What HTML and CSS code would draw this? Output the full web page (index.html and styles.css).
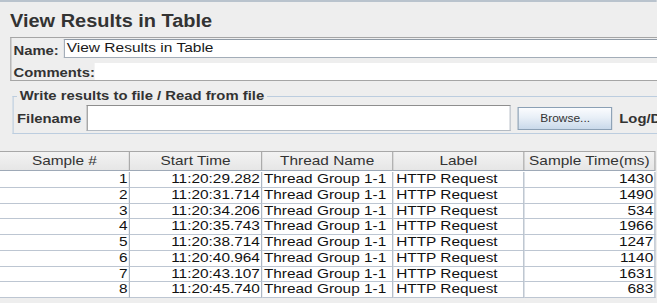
FILE: index.html
```html
<!DOCTYPE html>
<html>

<head>
  <link rel="stylesheet" href="styles.css">
</head>

<body>
  <div class="panel">
    <div class="topline"></div>
    <h1 class="title">View Results in Table</h1>

    <div class="namebox">
      <div class="namerow">
        <span class="lbl name-lbl">Name:</span>
        <div class="field">View Results in Table</div>
      </div>
      <div class="commentrow">
        <span class="lbl comment-lbl">Comments:</span>
        <div class="field plain"></div>
      </div>
    </div>

    <fieldset class="filebox">
      <legend>Write results to file / Read from file</legend>
      <div class="filerow">
        <span class="lbl file-lbl">Filename</span>
        <div class="filefield"></div>
        <button class="browse">Browse...</button>
        <span class="lbl log">Log/Display Only:</span>
      </div>
    </fieldset>

    <div class="results">
      <div class="head">
        <div>Sample #</div>
        <div>Start Time</div>
        <div>Thread Name</div>
        <div>Label</div>
        <div>Sample Time(ms)</div>
      </div>
      <div class="rows">
        <div class="row"><div class="num">1</div><div class="num">11:20:29.282</div><div>Thread Group 1-1</div><div class="lab">HTTP Request</div><div class="num">1430</div></div>
        <div class="row"><div class="num">2</div><div class="num">11:20:31.714</div><div>Thread Group 1-1</div><div class="lab">HTTP Request</div><div class="num">1490</div></div>
        <div class="row"><div class="num">3</div><div class="num">11:20:34.206</div><div>Thread Group 1-1</div><div class="lab">HTTP Request</div><div class="num">534</div></div>
        <div class="row"><div class="num">4</div><div class="num">11:20:35.743</div><div>Thread Group 1-1</div><div class="lab">HTTP Request</div><div class="num">1966</div></div>
        <div class="row"><div class="num">5</div><div class="num">11:20:38.714</div><div>Thread Group 1-1</div><div class="lab">HTTP Request</div><div class="num">1247</div></div>
        <div class="row"><div class="num">6</div><div class="num">11:20:40.964</div><div>Thread Group 1-1</div><div class="lab">HTTP Request</div><div class="num">1140</div></div>
        <div class="row"><div class="num">7</div><div class="num">11:20:43.107</div><div>Thread Group 1-1</div><div class="lab">HTTP Request</div><div class="num">1631</div></div>
        <div class="row"><div class="num">8</div><div class="num">11:20:45.740</div><div>Thread Group 1-1</div><div class="lab">HTTP Request</div><div class="num">683</div></div>
      </div>
    </div>
  </div>
</body>

</html>
```

FILE: styles.css
```css
body {
  margin: 0;
  background-color: #EEEEEE;
  font-family: "Liberation Sans", Arial, sans-serif;
  overflow: hidden;
}

/* the whole screen is a little wider than the font, so stretch it */
.panel {
  width: 576px;
  transform: scaleX(1.14);
  transform-origin: 0 0;
}

.topline {
  height: 2px;
  background-color: #B9C3CD;
}

.title {
  margin: 9px 0 0 8.8px;
  font-size: 17.5px;
  line-height: 20px;
  font-weight: bold;
  color: #333333;
}

.lbl {
  font-size: 13px;
  line-height: 15px;
  font-weight: bold;
  color: #333333;
  flex-shrink: 0;
}

.namebox {
  margin: 6px -40px 0 8.8px;
  border: 1px solid #A5A5A5;
  border-right: none;
}

.namerow {
  display: flex;
  padding-top: 1px;
  height: 20px;
  box-sizing: border-box;
}

.name-lbl {
  margin: 4px 0 0 2px;
}

.field {
  flex: 1;
  margin-left: 4.5px;
  height: 19px;
  box-sizing: border-box;
  border: 1px solid #A3ADB8;
  border-top-color: #8F9AA6;
  background-color: #FFFFFF;
  font-size: 13.6px;
  line-height: 16px;
  padding-left: 1.5px;
  color: #1A1A1A;
}

.commentrow {
  display: flex;
  margin-top: 5px;
  height: 17px;
}

.comment-lbl {
  margin: 1.5px 0 0 2px;
}

.field.plain {
  border: none;
  margin-left: 0;
  height: 17px;
}

.filebox {
  margin: 8px -40px 0 11.4px;
  padding: 0 0 2px 0;
  border: 1px solid #BCCDDF;
  border-right: none;
  min-width: 0;
}

.filebox legend {
  margin-left: 3px;
  padding: 0 2px;
  font-size: 13px;
  line-height: 14px;
  font-weight: bold;
  color: #333333;
}

.filerow {
  display: flex;
  align-items: center;
  margin-top: 2px;
  height: 26px;
  white-space: nowrap;
}

.file-lbl {
  margin-left: 2.5px;
}

.filefield {
  flex-shrink: 0;
  width: 372px;
  height: 26px;
  margin-left: 5px;
  box-sizing: border-box;
  border: 1px solid #B4BBC3;
  border-top-color: #8E8E8E;
  border-left-color: #8E8E8E;
  background-color: #FFFFFF;
}

.browse {
  flex-shrink: 0;
  margin-left: 6px;
  width: 83px;
  height: 23px;
  padding: 0;
  border: 1px solid #8BA0B5;
  background: linear-gradient(#FBFCFE, #E8EFF7 45%, #C9D9EA);
  font-family: "Liberation Sans", Arial, sans-serif;
  font-size: 10.5px;
  color: #333333;
}

.log {
  margin-left: 6px;
}

.results {
  margin-top: 17px;
  width: 575px;
}

.head,
.row {
  display: grid;
  grid-template-columns: 114px 116px 115px 115px 115px;
}

.head {
  border-top: 1px solid #A8A8A8;
  border-bottom: 1px solid #9EA9B7;
  background: linear-gradient(#F3F3F3, #E6E6E6);
}

.head div {
  height: 18px;
  line-height: 18px;
  text-align: center;
  font-size: 13.5px;
  color: #333333;
  border-right: 1px solid #A8A8A8;
  box-sizing: border-box;
}

.rows {
  background-color: #FFFFFF;
  padding-top: 1px;
}

.row {
  height: 15.75px;
}

.row div {
  border-right: 1px solid #A9B4C2;
  border-bottom: 1px solid #BDC6D2;
  box-sizing: border-box;
  font-size: 13.5px;
  line-height: 14.75px;
  padding: 0 1.5px;
  color: #111111;
  white-space: nowrap;
  overflow: hidden;
}

.row .num {
  text-align: right;
  padding-right: 1px;
}

.row .lab {
  padding-left: 2.5px;
}
```
